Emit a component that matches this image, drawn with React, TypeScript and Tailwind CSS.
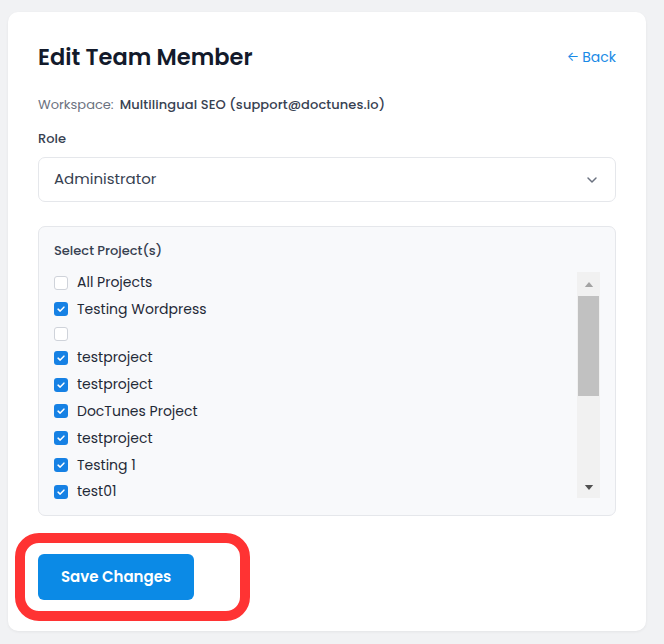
const projects: { name: string; checked: boolean }[] = [
  { name: "All Projects", checked: false },
  { name: "Testing Wordpress", checked: true },
  { name: "", checked: false },
  { name: "testproject", checked: true },
  { name: "testproject", checked: true },
  { name: "DocTunes Project", checked: true },
  { name: "testproject", checked: true },
  { name: "Testing 1", checked: true },
  { name: "test01", checked: true },
];

function Checkbox({ checked }: { checked: boolean }) {
  if (!checked) {
    return <span className="h-[14px] w-[14px] shrink-0 rounded-[3px] border border-[#cfd3da] bg-white" />;
  }
  return (
    <span className="flex h-[14px] w-[14px] shrink-0 items-center justify-center rounded-[3px] bg-[#1681e4]">
      <svg viewBox="0 0 12 12" className="h-[10px] w-[10px]" fill="none">
        <path d="M2.5 6.2 5 8.5 9.5 3.8" stroke="white" strokeWidth="1.8" strokeLinecap="round" strokeLinejoin="round" />
      </svg>
    </span>
  );
}

function FakeScrollbar() {
  return (
    <div className="flex h-[226px] w-[23px] shrink-0 flex-col items-center bg-[#f1f1f1]">
      <div className="flex h-[24px] w-full items-center justify-center">
        <svg viewBox="0 0 10 6" className="h-[5px] w-[10px]">
          <path d="M0 6 5 0 10 6Z" fill="#a3a3a3" />
        </svg>
      </div>
      <div className="h-[100px] w-[21px] bg-[#c1c1c1]" />
      <div className="flex-1" />
      <div className="flex h-[22px] w-full items-center justify-center">
        <svg viewBox="0 0 10 6" className="h-[5px] w-[10px]">
          <path d="M0 0 5 6 10 0Z" fill="#505050" />
        </svg>
      </div>
    </div>
  );
}

export default function App() {
  return (
    <div className="min-h-[644px] bg-[#f1f2f4] px-[8px] pt-[12px] font-['Poppins','Inter',sans-serif] text-[#1f2937]">
      <div className="w-[638px] rounded-[10px] bg-white px-[30px] pb-[10px] pt-[31px] shadow-[0_1px_3px_rgba(0,0,0,0.06)]">
        <div className="flex items-center justify-between">
          <h1 className="text-[22.5px] font-semibold leading-[28px] text-[#131a2b]">Edit Team Member</h1>
          <a className="flex items-center gap-[3px] text-[14px] text-[#1a8ae6]">
            <span className="text-[13px]">←</span>
            <span>Back</span>
          </a>
        </div>

        <div className="mt-[24px] flex gap-[6px] text-[13px] leading-[20px]">
          <span className="text-[#6b7280]">Workspace:</span>
          <span className="font-medium tracking-[0.1px] text-[#374151]">Multilingual SEO (support@doctunes.io)</span>
        </div>

        <div className="mt-[14px] text-[13px] font-medium leading-[20px] text-[#374151]">Role</div>
        <div className="mt-[8px] flex h-[45px] items-center justify-between rounded-[7px] border border-[#e5e7eb] px-[15px]">
          <span className="text-[15px] text-[#374151]">Administrator</span>
          <svg viewBox="0 0 24 24" className="h-[16px] w-[16px]" fill="none">
            <path d="M6 9l6 6 6-6" stroke="#6b7280" strokeWidth="2.2" strokeLinecap="round" strokeLinejoin="round" />
          </svg>
        </div>

        <div className="mt-[24px] rounded-[7px] border border-[#e5e7eb] bg-[#f8f9fb] px-[15px] pb-[13px] pt-[14px]">
          <div className="text-[13px] font-medium leading-[20px] text-[#374151]">Select Project(s)</div>
          <div className="mt-[11px] flex items-start gap-[8px]">
            <div className="flex flex-1 flex-col gap-[5.8px]">
              {projects.map((p, i) => (
                <label
                  key={i}
                  className={`flex shrink-0 items-center gap-[9px] text-[14px] text-[#1f2937] ${p.name ? "h-[21px]" : "h-[16px]"}`}
                >
                  <Checkbox checked={p.checked} />
                  {p.name && <span>{p.name}</span>}
                </label>
              ))}
            </div>
            <FakeScrollbar />
          </div>
        </div>

        <div className="-ml-[23px] mt-[17px] w-[235px] rounded-[24px] border-[10px] border-[#ff3333] px-[13px] py-[11px]">
          <button
            type="button"
            className="h-[46px] w-[156px] rounded-[6px] bg-[#0b8ae6] text-[15px] font-semibold text-white"
          >
            Save Changes
          </button>
        </div>
      </div>
    </div>
  );
}
